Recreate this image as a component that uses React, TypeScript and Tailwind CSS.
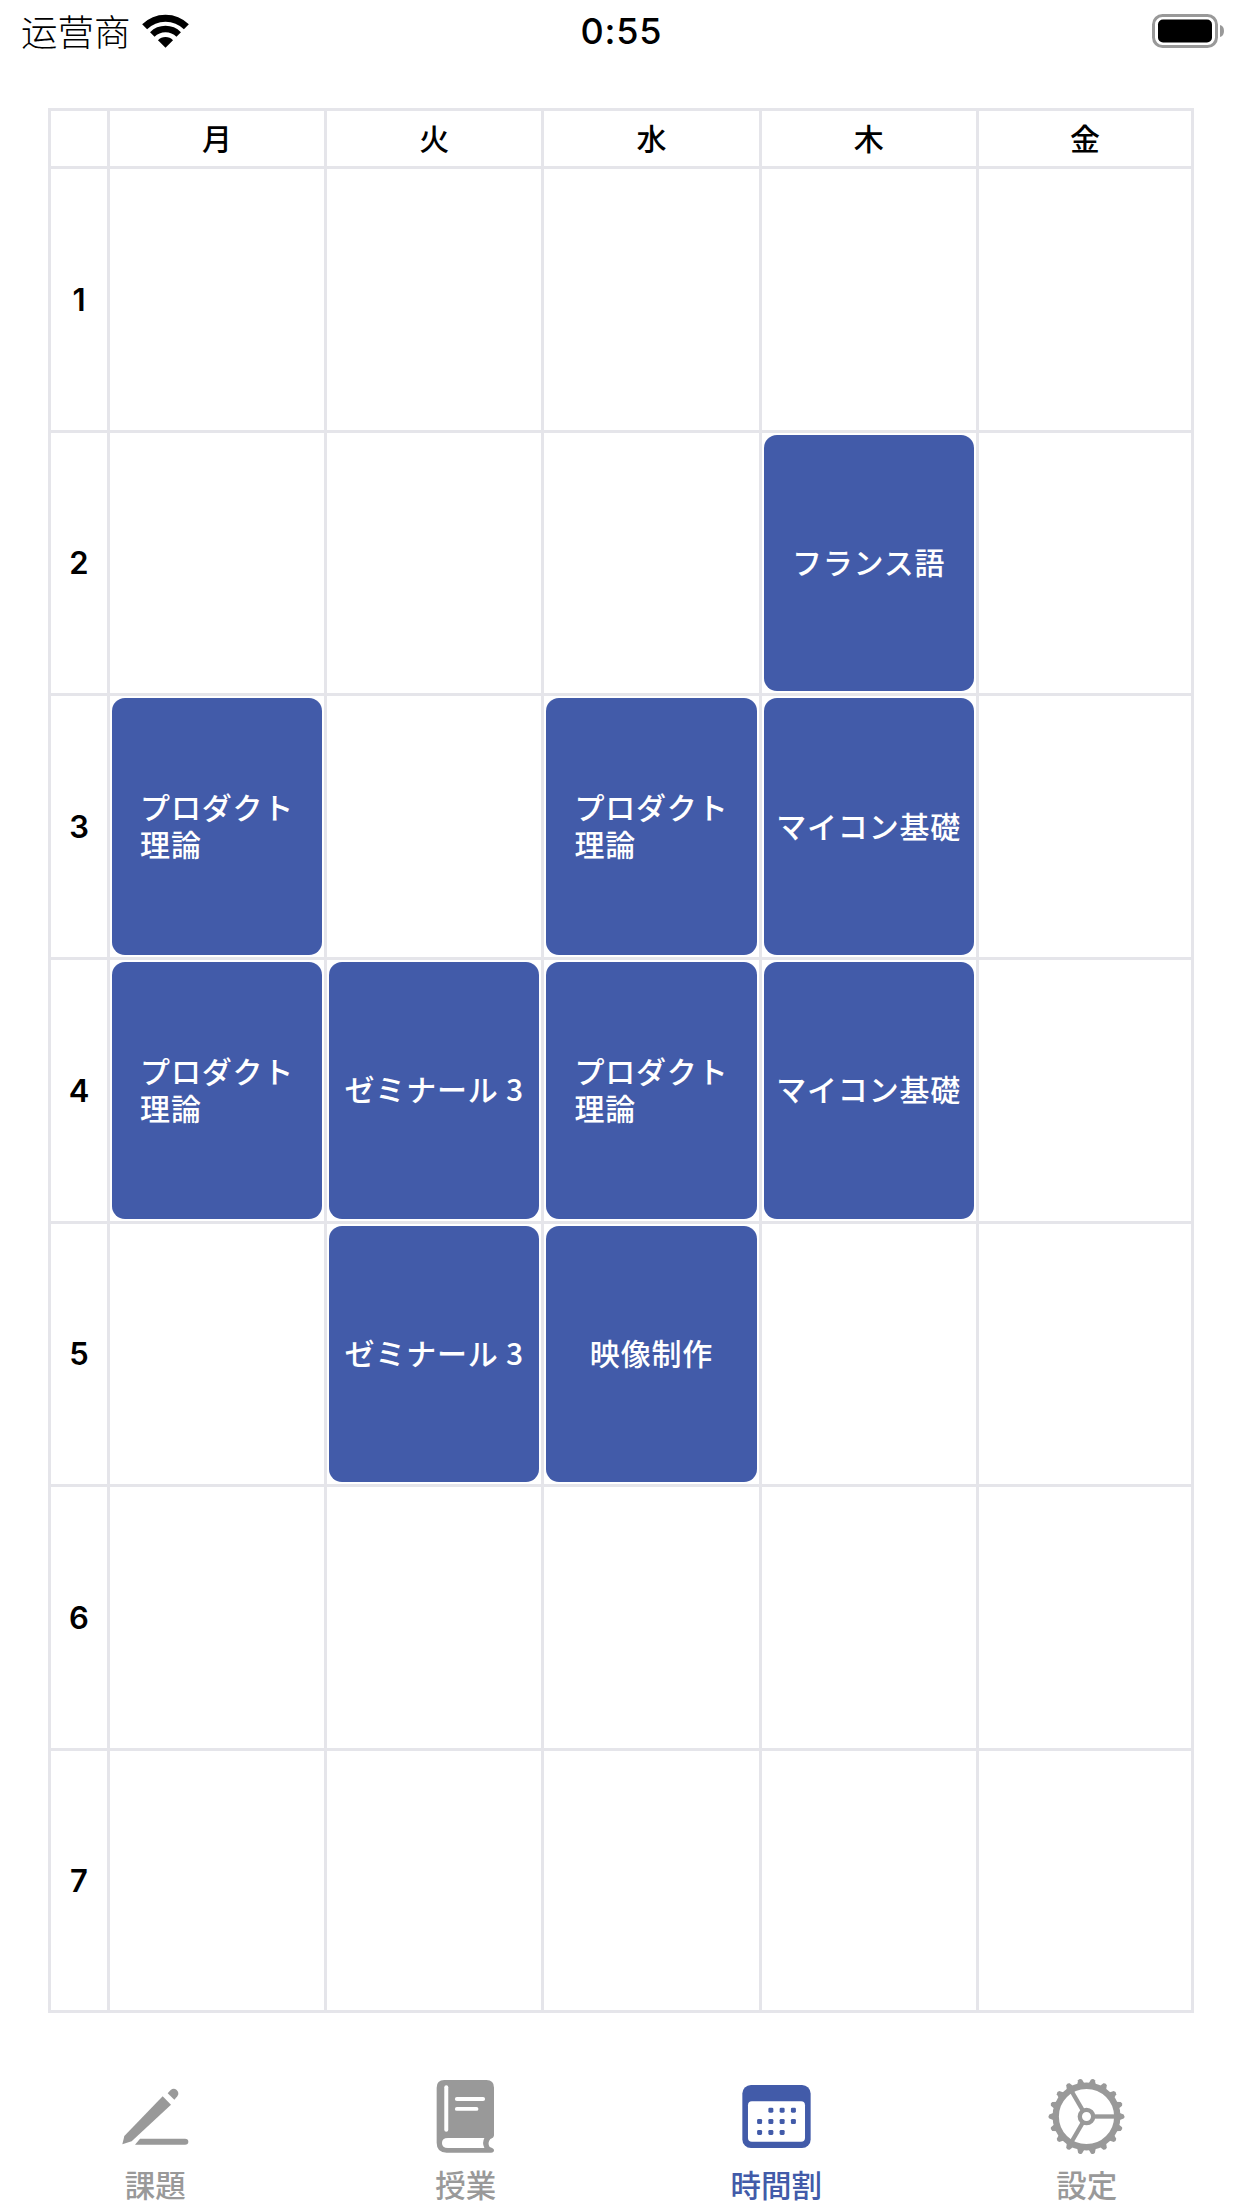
import React from 'react';

const FONT = '"Noto Sans CJK JP", "Noto Sans CJK SC", sans-serif';

const days = ['月', '火', '水', '木', '金'];
const pd = 'プロダクト\n理論';
const mc = 'マイコン基礎';
const zm = 'ゼミナール 3';
const table: (string | null)[][] = [
  [null, null, null, null, null],
  [null, null, null, 'フランス語', null],
  [pd, null, pd, mc, null],
  [pd, zm, pd, mc, null],
  [null, zm, '映像制作', null, null],
  [null, null, null, null, null],
  [null, null, null, null, null],
];

function Wifi() {
  return (
    <svg viewBox="428 36 140 102" className="w-[47px] h-[34px]" fill="none" stroke="#000">
      <path d="M435.4 74.4 A88.5 88.5 0 0 1 560.6 74.4" strokeWidth="21" />
      <path d="M458.4 97.4 A56 56 0 0 1 537.6 97.4" strokeWidth="19" />
      <path d="M498 137 L475.4 114.4 A32 32 0 0 1 520.6 114.4 Z" fill="#000" stroke="none" />
    </svg>
  );
}

function Battery() {
  return (
    <svg viewBox="0 0 74 36" className="w-[74px] h-[36px]">
      <rect x="2.5" y="2.5" width="63" height="31" rx="9" fill="none" stroke="#999" strokeWidth="3" />
      <rect x="7" y="6.5" width="54" height="23" rx="5" fill="#000" />
      <path d="M69 12 Q73 13 73 18 Q73 23 69 24 Z" fill="#999" />
    </svg>
  );
}

function Pencil() {
  return (
    <svg viewBox="120 85 210 180" className="w-[70px] h-[60px]" fill="#999">
      <path d="M127 257 L133 232 L248 113 L273 138 L155 248 Z" />
      <path d="M263 104 L272 94 Q281 87 290 94 Q299 103 292 113 L283 123 Z" />
      <path d="M180 240 H315 Q325 240 325 249 Q325 258 315 258 H165 Z" />
    </svg>
  );
}

function Book() {
  return (
    <svg viewBox="1070 60 178 224" className="w-[59px] h-[75px]">
      <path
        d="M1095 62 H1222 Q1245 62 1245 85 V228 Q1245 237 1234 240 Q1224 252 1232 264 Q1245 268 1245 274 Q1245 281 1236 281 H1102 Q1072 281 1072 251 V85 Q1072 62 1095 62 Z"
        fill="#999"
      />
      <rect x="1095" y="78" width="12" height="140" rx="6" fill="#fff" />
      <rect x="1127" y="113" width="91" height="12" rx="6" fill="#fff" />
      <rect x="1127" y="143" width="71" height="12" rx="6" fill="#fff" />
      <path d="M1106 237 H1216 Q1208 252 1216 267 H1106 Q1088 267 1088 252 Q1088 237 1106 237 Z" fill="#fff" />
    </svg>
  );
}

function Calendar() {
  const dots: [number, number][] = [
    [212, 154], [246, 154], [280, 154],
    [178, 188], [212, 188], [246, 188], [280, 188],
    [178, 221], [212, 221], [246, 221],
  ];
  return (
    <svg viewBox="126 78 206 190" className="w-[69px] h-[63px]">
      <rect x="126" y="78" width="206" height="190" rx="26" fill="#425ba9" />
      <rect x="143" y="127" width="172" height="122" rx="12" fill="#fff" />
      {dots.map(([x, y]) => (
        <rect key={`${x}-${y}`} x={x - 7.5} y={y - 7.5} width="15" height="15" rx="4" fill="#425ba9" />
      ))}
    </svg>
  );
}

function Gear() {
  const teeth = Array.from({ length: 18 }, (_, i) => i * 20 + 10);
  return (
    <svg viewBox="1042 52 236 236" className="w-[79px] h-[79px]" fill="none" stroke="#999">
      {teeth.map((a) => (
        <path key={a} d="M1146 80 L1154 59 Q1160 54 1166 59 L1174 80 Z" fill="#999" stroke="none" transform={`rotate(${a} 1160 170)`} />
      ))}
      <circle cx="1160" cy="170" r="92" strokeWidth="19" />
      <circle cx="1160" cy="170" r="20" strokeWidth="13" />
      <path d="M1180 170 H1255" strokeWidth="13" />
      <path d="M1149 152 L1113 90" strokeWidth="13" />
      <path d="M1149 188 L1113 250" strokeWidth="13" />
    </svg>
  );
}

function Cell({ text }: { text: string | null }) {
  return (
    <div className="bg-white p-[2px] min-w-0 min-h-0">
      {text && (
        <div className="h-full rounded-[13px] bg-[#425ba9] flex items-center justify-center">
          <div className={`mb-[3px] text-white text-[30px] leading-[37px] font-medium tracking-[0.8px] whitespace-pre ${text.includes('\n') ? 'text-left' : 'text-center'}`}>
            {text}
          </div>
        </div>
      )}
    </div>
  );
}

function Tab({ label, active, children }: { label: string; active?: boolean; children: React.ReactNode }) {
  return (
    <div className="flex-1 flex flex-col items-center">
      <div className="h-[79px] flex items-center justify-center">{children}</div>
      <div className={`mt-[10px] text-[30.5px] leading-[36px] font-medium ${active ? 'text-[#425ba9]' : 'text-[#999]'}`}>{label}</div>
    </div>
  );
}

export default function App() {
  return (
    <div className="w-[1242px] h-[2208px] bg-white flex flex-col overflow-hidden" style={{ fontFamily: FONT }}>
      <div className="h-[62px] pl-[21px] pr-[22px] grid grid-cols-3 items-center text-black">
        <div className="flex items-center gap-[11px]">
          <span className="text-[36.5px] leading-[44px]" style={{ fontFamily: '"Noto Sans CJK SC", sans-serif', fontWeight: 300 }}>运营商</span>
          <Wifi />
        </div>
        <div className="text-center text-[36px] font-medium tracking-[0.8px] pl-[2px]" style={{ fontFamily: 'Inter, sans-serif' }}>0:55</div>
        <div className="flex justify-end -mr-[5px]"><Battery /></div>
      </div>

      <div className="ml-[48px] mt-[46px] w-[1146px] h-[1905px] bg-[#e5e5ea] p-[3px] gap-[3px] grid grid-cols-[56px_repeat(4,214.2px)_1fr] grid-rows-[55px_repeat(6,260.7px)_1fr]">
        <div className="bg-white" />
        {days.map((d) => (
          <div key={d} className="bg-white flex items-center justify-center pb-[2px] text-[30px] font-medium text-black">{d}</div>
        ))}
        {table.map((row, i) => (
          <React.Fragment key={i}>
            <div className="bg-white flex items-center justify-center pt-[1px] text-[31px] font-semibold text-black" style={{ fontFamily: 'Inter, sans-serif' }}>{i + 1}</div>
            {row.map((c, j) => (
              <Cell key={j} text={c} />
            ))}
          </React.Fragment>
        ))}
      </div>

      <div className="flex mt-[64px]">
        <Tab label="課題"><Pencil /></Tab>
        <Tab label="授業"><Book /></Tab>
        <Tab label="時間割" active><Calendar /></Tab>
        <Tab label="設定"><Gear /></Tab>
      </div>
    </div>
  );
}
